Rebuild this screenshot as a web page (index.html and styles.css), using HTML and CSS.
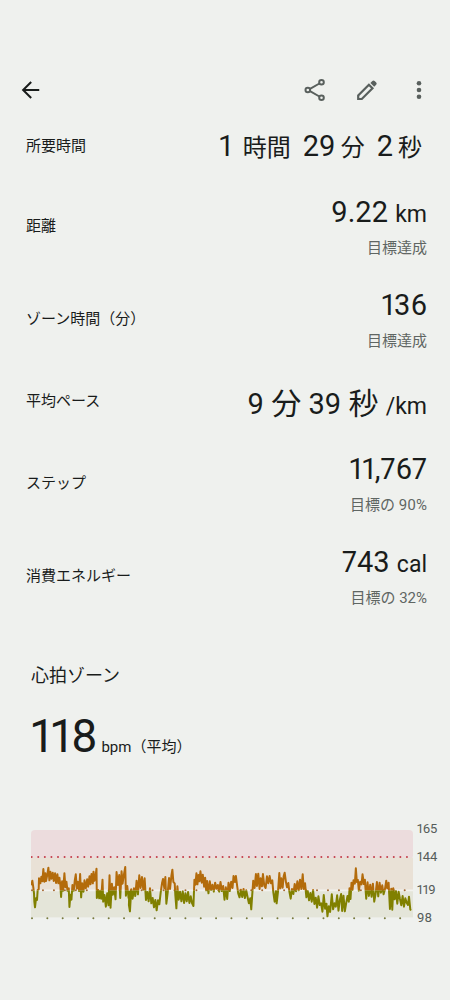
FILE: index.html
```html
<!DOCTYPE html>
<html lang="ja">
<head>
<meta charset="utf-8">
<meta name="viewport" content="width=device-width, initial-scale=1">
<title>心拍ゾーン</title>
<link rel="stylesheet" href="styles.css">
</head>
<body>
<header class="bar">
  <button class="icon dark" type="button" aria-label="戻る">
    <svg viewBox="0 0 24 24"><path d="M21 12H4M12.2 3.2L3.4 12l8.8 8.8" fill="none" stroke="currentColor" stroke-width="2.2"/></svg>
  </button>
  <div class="actions">
    <button class="icon" type="button" aria-label="共有">
      <svg viewBox="0 0 24 24"><g fill="none" stroke="currentColor" stroke-width="2"><path d="M7 10.8L16.4 5.5M7 13.2l9.4 5.3"/><circle cx="4.8" cy="12" r="2.3"/><circle cx="18.5" cy="4.3" r="2.3"/><circle cx="18.5" cy="19.7" r="2.3"/></g></svg>
    </button>
    <button class="icon" type="button" aria-label="編集">
      <svg viewBox="0 0 24 24"><path d="M3.2 21v-3.6L13.9 6.7l3.6 3.6L6.8 21z" fill="none" stroke="currentColor" stroke-width="2.2"/><path d="M15.4 5l2-2a1.6 1.6 0 0 1 2.2 0l1.6 1.6a1.6 1.6 0 0 1 0 2.2l-2 2z" fill="currentColor"/></svg>
    </button>
    <button class="icon" type="button" aria-label="その他">
      <svg viewBox="0 0 24 24" fill="currentColor"><circle cx="12" cy="5.3" r="2.3"/><circle cx="12" cy="12" r="2.3"/><circle cx="12" cy="18.7" r="2.3"/></svg>
    </button>
  </div>
</header>
<main>
  <dl class="stats">
    <div class="row duration"><dt>所要時間</dt><dd><p class="value"><span>1</span><span class="unit">時間</span><span class="next">29</span><span class="unit">分</span><span class="next">2</span><span class="unit">秒</span></p></dd></div>
    <div class="row"><dt>距離</dt><dd><p class="value">9.22 <span class="unit">km</span></p><p class="goal">目標達成</p></dd></div>
    <div class="row"><dt>ゾーン時間（分）</dt><dd><p class="value">136</p><p class="goal">目標達成</p></dd></div>
    <div class="row pace"><dt>平均ペース</dt><dd><p class="value">9 <span class="kanji">分</span> 39 <span class="kanji">秒</span> <span class="unit">/km</span></p></dd></div>
    <div class="row"><dt>ステップ</dt><dd><p class="value">11,767</p><p class="goal">目標の 90%</p></dd></div>
    <div class="row"><dt>消費エネルギー</dt><dd><p class="value">743 <span class="unit">cal</span></p><p class="goal">目標の 32%</p></dd></div>
  </dl>
  <section class="heart">
    <h2>心拍ゾーン</h2>
    <p class="average"><span class="bpm">118</span> bpm（平均）</p>
    <div class="chart">
      <svg class="plot" viewBox="33 30 1143 270" preserveAspectRatio="none" role="img" aria-label="心拍数のグラフ">
        <defs>
          <clipPath id="upper"><rect x="30" y="30" width="1150" height="181"/></clipPath>
          <clipPath id="lower"><rect x="30" y="211" width="1150" height="89"/></clipPath>
          <path id="trace" d="M34 196L37 182L40 203L42 220L43 245L45 262L48 235L51 240L53 210L56 208L57 175L61 190L64 170L67 184L70 147L73 185L76 160L78 183L82 163L85 143L88 181L91 155L94 176L98 158L101 183L105 160L108 189L112 163L115 190L118 173L121 198L123 231L126 184L129 212L133 160L136 202L139 185L142 212L146 205L148 261L151 224L154 239L157 195L161 212L164 181L167 163L170 206L173 185L177 213L180 162L183 232L186 190L190 215L193 181L197 205L201 178L204 200L208 169L211 193L214 162L218 190L220 155L223 182L226 170L229 146L230 234L234 210L237 235L240 212L243 236L247 179L249 245L253 225L257 260L261 220L265 256L268 166L271 263L275 191L278 224L282 202L286 238L289 156L293 195L297 165L300 234L304 154L307 191L311 164L315 141L317 227L321 198L325 234
          L327 215L326 255L329 274L333 208L337 236L341 205L345 228L349 182L353 223L357 166L361 204L365 171L369 209L373 175L377 240L381 216L385 244L389 205L393 250L397 234L401 262L405 240L409 271L413 241L417 253L421 218L425 190L428 177L432 205L435 171L438 251L442 218L446 174L449 207L453 168L456 149L459 186L463 190L465 227L468 265L471 199L475 239L479 215L483 244L487 214L491 249L495 220L499 244L503 216L507 249L511 229L515 250L519 258L522 179L525 194L528 160L531 193L534 165L537 184L540 154L544 188L547 164L551 200L554 173L557 211L560 183L564 220L568 184L572 210L576 194L580 215L584 188L588 206L592 195L596 215L600 186L604 213L608 198L612 239L616 202L620 237L624 188L628 213L632 185L636 204L639 168L643 186L646 168L650 199L653 220L657 232L661 209L665 231L669 207L673 234L677 211L681 231L685 250L689 235L692 268L695 224L698 182L702 204L706 162L709 198L713 161L717 207L720 175L724 199L727 162L731 197L735 204L739 169L743 190L747 168L751 190L755 181L758 216L762 245L766 213L768 250L772 216L776 159L779 205L782 175L786 203L789 169L792 158L796 187L799 202L803 189L806 214L810 236L814 207L818 222L822 192L826 214L830 184L834 211L838 179L842 207L846 163L849 207L853 190L857 232L861 213L865 241L869 219L873 245L877 210L881 252L885 233L889 263L893 229L897 255L901 250L905 275L909 225L913 266L917 251L920 289L924 259L928 276L933 223L937 268L941 250L945 260L949 226L953 272L957 240L961 222L964 273L968 227L972 274L976 250L980 228L984 245L986 205L989 237L992 188L995 210L998 181L1002 191L1005 145L1008 186L1011 180L1014 212L1018 185L1022 193L1025 163L1029 192L1032 179L1036 236L1040 187L1044 228L1048 194L1052 230L1056 191L1060 245L1064 222L1068 186L1072 229L1076 188L1080 218L1084 196L1088 223L1092 208L1096 182L1099 205L1103 188L1107 267L1111 206L1114 269L1117 205L1121 238L1125 213L1129 251L1133 215L1137 237L1141 256L1145 228L1149 260L1153 235L1157 248L1161 255L1164 230L1168 269L1171 270"/>
        </defs>
        <rect class="zone-peak" x="33" y="30" width="1143" height="88" rx="12"/>
        <rect class="zone-cardio" x="33" y="113" width="1143" height="98"/>
        <rect class="zone-fat" x="33" y="211" width="1143" height="81"/>
        <path class="divider" d="M33 211H1176"/>
        <path class="dots dots-peak" d="M35 111H1160"/>
        <path class="dots dots-cardio" d="M36 211H1160"/>
        <path class="dots dots-fat" d="M36 295H1160"/>
        <use class="line-fat" href="#trace" clip-path="url(#lower)"/>
        <use class="line-cardio" href="#trace" clip-path="url(#upper)"/>
      </svg>
      <div class="scale"><span>165</span><span>144</span><span>119</span><span>98</span></div>
    </div>
  </section>
</main>
</body>
</html>
```

FILE: styles.css
```css
* { box-sizing: border-box; }

body {
  margin: 0;
  padding-top: 70px;
  background: #eff1ee;
  color: #191c1b;
  font-family: Roboto, "Noto Sans CJK JP", sans-serif;
  font-variant-numeric: proportional-nums;
}

p, dl, dd, h2 { margin: 0; }

.bar {
  display: flex;
  justify-content: space-between;
  align-items: center;
  height: 40px;
  padding: 0 19px 0 20px;
}

.actions { display: flex; gap: 28px; }

.icon {
  width: 24px;
  height: 24px;
  padding: 0;
  border: 0;
  background: none;
  color: #59605d;
}

.icon svg { display: block; width: 24px; height: 24px; }
.icon.dark { width: 22px; color: #191c1b; }
.icon.dark svg { width: 22px; }

.stats { padding: 3px 23px 0 26px; }

.row {
  display: flex;
  justify-content: space-between;
  align-items: center;
  padding: 13px 0 12px;
}

.row dt { font-size: 15px; line-height: 24px; }
.row dd { text-align: right; }

.value {
  font-size: 29px;
  line-height: 40px;
  white-space: nowrap;
}

.unit, .kanji { line-height: 24px; }
.unit { font-size: 23px; }
.kanji { font-size: 30px; }

.goal {
  margin-top: 4px;
  font-size: 15px;
  line-height: 24px;
  color: #5f6663;
}

.duration { padding-bottom: 13px; }

.duration .value {
  display: flex;
  align-items: baseline;
  gap: 5px;
  padding-right: 5px;
}

.duration .unit { font-size: 24px; }
.duration .unit:nth-child(2) { padding-left: 6px; }
.duration .next { padding-left: 7px; }
.pace { padding: 13px 0 12px; }
.pace dd { padding-top: 6px; }

.heart { padding: 39px 8px 0 31px; }

.heart h2 {
  font-size: 18px;
  font-weight: 400;
  line-height: 30px;
}

.average { margin-top: 15px; font-size: 15px; line-height: 24px; }
.bpm { font-size: 46px; line-height: 60px; }

.chart {
  display: grid;
  grid-template-columns: 1fr 25px;
  gap: 4px;
  margin-top: 49px;
}

.plot {
  display: block;
  width: 100%;
  height: 90px;
  margin-top: 15px;
}

.scale {
  display: grid;
  grid-template-rows: 28px 28px 38px 18px;
  align-items: center;
  font-size: 13px;
  line-height: 18px;
  color: #555c59;
}

.zone-peak { fill: #ecdcdd; }
.zone-cardio { fill: #e9e1d6; }
.zone-fat { fill: #e4e5d9; }
.divider { stroke: #f2f2ee; stroke-width: 5; }
.dots { fill: none; stroke-width: 6; stroke-linecap: round; }
.dots-peak { stroke: #c43f4b; stroke-dasharray: 0 19.7; }
.dots-cardio { stroke: #a66a35; stroke-dasharray: 0 32.8; }
.dots-fat { stroke: #787a3d; stroke-dasharray: 0 45.9; }

.line-fat, .line-cardio { fill: none; stroke-width: 6; stroke-linejoin: round; }
.line-fat { stroke: #808000; }
.line-cardio { stroke: #b36b0b; }
```
